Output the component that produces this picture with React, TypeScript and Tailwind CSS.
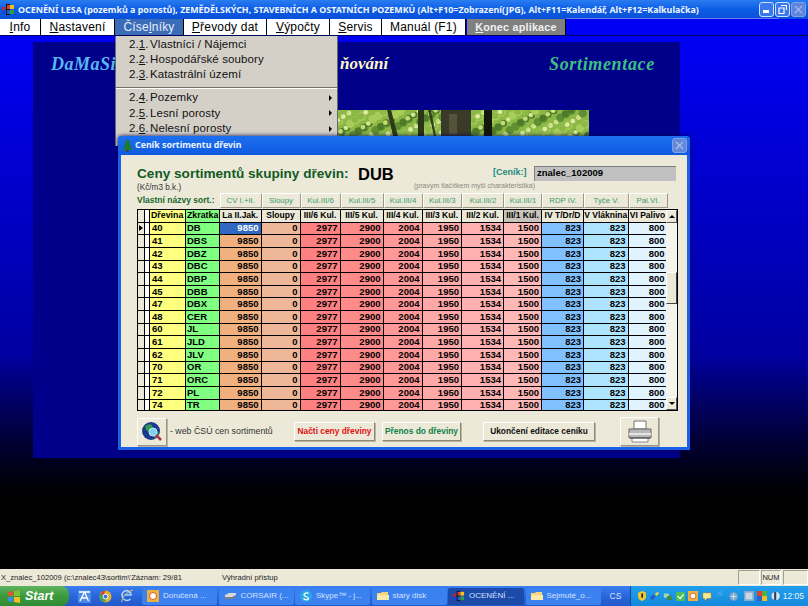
import React from "react";

const rows: [string, string][] = [
  ["40", "DB"], ["41", "DBS"], ["42", "DBZ"], ["43", "DBC"], ["44", "DBP"], ["45", "DBB"], ["47", "DBX"], ["48", "CER"],
  ["60", "JL"], ["61", "JLD"], ["62", "JLV"], ["70", "OR"], ["71", "ORC"], ["72", "PL"], ["74", "TR"],
];
const headers = ["La II.Jak.", "Sloupy", "III/6 Kul.", "III/5 Kul.", "III/4 Kul.", "III/3 Kul.", "III/2 Kul.", "III/1 Kul.", "IV T/Dr/D", "V Vláknina", "VI Palivo"];
const values = ["9850", "0", "2977", "2900", "2004", "1950", "1534", "1500", "823", "823", "800"];
const colors = ["bg-[#f0b080]", "bg-[#eeb898]", "bg-[#ff8080]", "bg-[#ff8a8a]", "bg-[#ff9898]", "bg-[#ffa8a8]", "bg-[#ffb0b0]", "bg-[#ffb8b8]", "bg-[#80c0ff]", "bg-[#aee4ff]", "bg-[#e0f3ff]"];
const tabs: [string, string][] = [
  ["CV I.+II.", "w-[41.5px]"], ["Sloupy", "w-[39px]"], ["Kul.III/6", "w-[40px]"], ["Kul.III/5", "w-[43px]"], ["Kul.III/4", "w-[39px]"],
  ["Kul.III/3", "w-[39.5px]"], ["Kul.III/2", "w-[42px]"], ["Kul.III/1", "w-[38px]"], ["RDP IV.", "w-[42px]"], ["Tyče V.", "w-[44.5px]"], ["Pal.VI.", "w-[39px]"],
];

// leafy blotches of the forest photo
const leafColors = ["#c4dc78", "#8cb848", "#5f8f30", "#dcebA0", "#4f7a2a", "#a8cc58"];
const leaves = Array.from({ length: 260 }, (_, i) => ({
  x: (i * 97.3) % 252,
  y: (i * 41.7) % 26,
  r: 1.5 + ((i * 7) % 4) * 0.9,
  c: leafColors[(i * 5 + (i >> 2)) % leafColors.length],
}));

function Menu({ w, label, u, rest, active }: { w: string; label?: string; u: string; rest: string; active?: boolean }) {
  return (
    <div className={`${w} h-full shrink-0 flex items-center justify-center border-r border-black text-[12px] tracking-[0.2px] ${active ? "bg-[#3a6cb8] text-[#e8eefa]" : "bg-white text-black"}`}>
      {label}<span className="underline">{u}</span>{rest}
    </div>
  );
}

function Drop({ n, u, label, arrow, h }: { n: string; u: string; label: string; arrow?: boolean; h: string }) {
  return (
    <div className={`${h} flex items-center pl-[13px] pr-[5px] text-[11.5px] text-[#111] tracking-[0.1px]`}>
      <span className="w-[21px] shrink-0">{n}<span className="underline">{u}</span>.</span>
      <span className="flex-1">{label}</span>
      {arrow && <span className="w-0 h-0 border-y-[3px] border-y-transparent border-l-[3px] border-l-black" />}
    </div>
  );
}

function Btn({ w, text, color }: { w: string; text: string; color: string }) {
  return (
    <div className={`${w} h-[19px] shrink-0 flex items-center justify-center bg-[#ece9d8] border border-t-white border-l-white border-r-[#8a8878] border-b-[#8a8878] shadow-[1px_1px_0_#b8b5a5] text-[8.4px] font-bold whitespace-nowrap ${color}`}>
      {text}
    </div>
  );
}

function Task({ icon, text, w, active }: { icon: React.ReactNode; text: string; w: string; active?: boolean }) {
  return (
    <div className={`${w} h-[17px] shrink-0 flex items-center gap-[4px] pl-[5px] rounded-[2px] text-[8px] text-[#d4e2ff] overflow-hidden ${active ? "bg-[#1c4aa8]" : "bg-[#3c81f0]"}`}>
      {icon}
      <span className="whitespace-nowrap">{text}</span>
    </div>
  );
}

const Folder = () => (
  <svg width="12" height="10" viewBox="0 0 12 10" className="shrink-0"><path d="M0 2h4l1-1h6v8H0z" fill="#f5d77a" /><path d="M0 4h12v5H0z" fill="#fbe9a8" /></svg>
);
const Logo = ({ s = 13 }: { s?: number }) => (
  <svg width={s} height={s} viewBox="0 0 13 13" className="shrink-0">
    <rect x="0" y="4" width="3" height="3" fill="#d02020" /><rect x="0" y="8" width="3" height="3" fill="#2040d0" />
    <rect x="4" y="1" width="4" height="11" fill="#111" /><rect x="5" y="2" width="3" height="4" fill="#e04030" />
    <rect x="8" y="2" width="4" height="4" fill="#f0c020" /><rect x="8" y="7" width="4" height="4" fill="#30a040" /><rect x="5" y="7" width="3" height="4" fill="#2060d0" />
  </svg>
);

export default function App() {
  return (
    <div className="relative w-[808px] h-[606px] overflow-hidden flex flex-col bg-black font-['Liberation_Sans',sans-serif]">
      {/* Title bar */}
      <div className="h-[19px] shrink-0 flex items-center pl-[2px] pr-[2px] bg-gradient-to-b from-[#2a7cf0] via-[#0a5ce6] to-[#0a50d8]">
        <Logo />
        <span className="ml-[3px] text-[8.9px] font-bold text-[#f2f6ff] whitespace-nowrap font-['Noto_Sans',sans-serif]">
          OCENĚNÍ LESA (pozemků a porostů), ZEMĚDĚLSKÝCH, STAVEBNÍCH A OSTATNÍCH POZEMKŮ (Alt+F10=Zobrazení(JPG), Alt+F11=Kalendář, Alt+F12=Kalkulačka)
        </span>
        <div className="ml-auto flex gap-[1px]">
          <div className="w-[15px] h-[15px] rounded-[3px] border border-[#cfe0ff] bg-[#3a78ee] flex items-end pl-[3px] pb-[3px]"><span className="w-[6px] h-[3px] bg-white" /></div>
          <div className="w-[15px] h-[15px] rounded-[3px] border border-[#cfe0ff] bg-[#3a78ee] flex items-center justify-center">
            <svg width="9" height="9" viewBox="0 0 9 9"><path d="M3 .5h5.5V5M1 3h5v5.5H1z" fill="none" stroke="#fff" strokeWidth="1.2" /></svg>
          </div>
          <div className="w-[15px] h-[15px] rounded-[3px] border border-[#7fa2ea] bg-[#5f86dc] flex items-center justify-center">
            <svg width="9" height="9" viewBox="0 0 9 9"><path d="M1 1l7 7M8 1l-7 7" stroke="#9db7ee" strokeWidth="1.4" /></svg>
          </div>
        </div>
      </div>

      {/* Menu bar */}
      <div className="h-[17px] shrink-0 flex bg-[#0000f4] border-b border-[#000060]">
        <Menu w="w-[41px]" u="I" rest="nfo" />
        <Menu w="w-[74px]" u="N" rest="astavení" />
        <Menu w="w-[69px]" label="Číse" u="l" rest="níky" active />
        <Menu w="w-[83px]" u="P" rest="řevody dat" />
        <Menu w="w-[63px]" u="V" rest="ýpočty" />
        <Menu w="w-[52px]" u="S" rest="ervis" />
        <Menu w="w-[84px]" label="Manuál (F1)" u="" rest="" />
        <div className="ml-[1px] w-[99px] h-full flex items-center justify-center bg-[#808080] text-[#f0f0f0] font-bold text-[10.8px] tracking-[0.2px] border-r border-black">
          <span className="underline">K</span>onec aplikace
        </div>
        <div className="w-[213px] h-[1px] -mt-[1px] bg-[#6f78e8]" />
      </div>

      {/* Desktop area */}
      <div className="flex-1 min-h-0 bg-gradient-to-b from-[#0000f4] via-[#0000a0] via-60% to-black to-90% pt-[6px] pl-[33px]">
        <div className="w-[647px] h-[416px] bg-[#00008a] flex flex-col">
          <div className="flex items-center h-[44px] font-['Liberation_Serif',serif] italic font-bold text-[18px] tracking-[0.5px]">
            <span className="ml-[18px] text-[#58b8f0]">DaMaSi</span>
            <span className="ml-[224px] w-[49px] text-[17px] text-[#fff8c8] whitespace-nowrap tracking-[0px]">ňování</span>
            <span className="ml-[160px] text-[#3cc080] tracking-[0.65px]">Sortimentace</span>
          </div>
          <svg width="252" height="26" viewBox="0 0 252 26" className="ml-[304px] mt-[24px]">
            <defs><filter id="soft"><feGaussianBlur stdDeviation="0.7" /></filter></defs>
            <rect width="252" height="26" fill="#8cb848" />
            <g filter="url(#soft)">
              {leaves.map((l, i) => (
                <circle key={i} cx={l.x} cy={l.y} r={l.r} fill={l.c} />
              ))}
            </g>
            <path d="M50 0l6 26h5L54 0z" fill="#2e3a18" />
            <rect x="81" width="6" height="26" fill="#2a3416" />
            <path d="M91 0l6 26h2L94 0z" fill="#30401a" />
            <rect x="104" width="30" height="26" fill="#3a3a28" />
            <rect x="112" y="4" width="8" height="20" fill="#55523c" />
            <rect x="147" width="8" height="26" fill="#14180c" />
          </svg>
        </div>
      </div>

      {/* Status bar */}
      <div className="h-[17px] shrink-0 flex items-center bg-[#ece9d8] text-[7.6px] text-[#222]">
        <span className="ml-[1px] w-[221px] whitespace-nowrap">X_znalec_102009 (c:\znalec43\sortim\'Záznam: 29/81</span>
        <span className="whitespace-nowrap">Výhradní přístup</span>
        <div className="ml-auto flex h-full items-center">
          <div className="w-[22px] h-[15px] border border-t-[#a0a090] border-l-[#a0a090] border-r-white border-b-white" />
          <div className="w-[20px] ml-[1px] h-[15px] border border-t-[#a0a090] border-l-[#a0a090] border-r-white border-b-white flex items-center justify-center text-[7.5px]">NUM</div>
          <div className="w-[25px] h-[15px] ml-[2px] border border-t-[#a0a090] border-l-[#a0a090] border-r-white border-b-white" />
        </div>
      </div>

      {/* Taskbar */}
      <div className="h-[20px] shrink-0 flex items-center bg-gradient-to-b from-[#3a7ff0] via-[#2a66dc] to-[#2458c8]">
        <div className="w-[69px] h-full shrink-0 flex items-center gap-[4px] pl-[7px] rounded-r-[8px] bg-gradient-to-b from-[#5fb45f] via-[#3c9a3c] to-[#2f8a34] text-white italic font-bold text-[12.5px]">
          <svg width="14" height="13" viewBox="0 0 14 13" className="shrink-0"><path d="M1 2l5-1v5H1z" fill="#e8522a" /><path d="M7 1l6-1v6H7z" fill="#7cc03c" /><path d="M1 7h5v5l-5-1z" fill="#3c8cf0" /><path d="M7 7h6v6l-6-1z" fill="#f4c020" /></svg>
          Start
        </div>
        <div className="flex items-center gap-[8px] ml-[9px] w-[63px] shrink-0">
          <svg width="13" height="13" viewBox="0 0 13 13" className="shrink-0"><rect width="13" height="13" fill="#4a8ae8" /><path d="M1 2h11M6.5 2L2 11M6.5 2l4 9M4 8h5" stroke="#fff" strokeWidth="1.3" fill="none" /></svg>
          <svg width="13" height="13" viewBox="0 0 13 13" className="shrink-0"><circle cx="6.5" cy="6.5" r="6" fill="#e0b030" /><path d="M6.5 .5a6 6 0 0 0-5 3l2.5 4z" fill="#d84030" /><path d="M1.5 3.5a6 6 0 0 0 4 9l2-4z" fill="#48a048" /><circle cx="6.5" cy="6.5" r="2.5" fill="#3a78d8" stroke="#fff" /></svg>
          <svg width="14" height="14" viewBox="0 0 14 14" className="shrink-0"><path d="M3 9a4.5 4.5 0 1 1 8-3H4.5M3.5 10c2 2 5 2 7 0" fill="none" stroke="#a8d4ff" strokeWidth="1.7" /><path d="M2 13C1 10 6 3 13 1" stroke="#e8c860" strokeWidth="1" fill="none" /></svg>
          <span className="text-[8px] text-[#cfe0ff] -mt-[6px]">»</span>
        </div>
        <div className="flex items-center gap-[1.5px] ml-[1px]">
          <Task w="w-[75px]" text="Doručená ..." icon={<svg width="12" height="12" viewBox="0 0 12 12" className="shrink-0"><rect width="12" height="12" fill="#f0b040" /><circle cx="6" cy="6" r="3.5" fill="#fff" stroke="#d06020" /></svg>} />
          <Task w="w-[75px]" text="CORSAIR (..." icon={<svg width="13" height="8" viewBox="0 0 13 8" className="shrink-0"><path d="M1 3l4-2h7v2l-4 3H1z" fill="#d8d8d8" /><path d="M1 5h7l4-2v1l-4 3H1z" fill="#808080" /></svg>} />
          <Task w="w-[75px]" text="Skype™ - j..." icon={<svg width="12" height="12" viewBox="0 0 12 12" className="shrink-0"><circle cx="6" cy="6" r="6" fill="#28a8e8" /><path d="M8.5 3.5C7 2.5 3.8 3 4 5s4.500 1.500 4.500 3.500S5 10 3.500 8.500" stroke="#fff" strokeWidth="1.3" fill="none" /></svg>} />
          <Task w="w-[75px]" text="stary disk" icon={<Folder />} />
          <Task w="w-[76px]" text="OCENĚNÍ ..." active icon={<Logo s={12} />} />
          <Task w="w-[75px]" text="Sejmuté_o..." icon={<Folder />} />
        </div>
        <span className="ml-[9px] text-[8.5px] text-[#dbe6ff]">CS</span>
        <div className="ml-auto w-[178px] h-full flex items-center gap-[3px] pl-[7px] bg-gradient-to-b from-[#22a0ec] to-[#1488dc] border-l border-[#0c4aa8]">
          <svg width="10" height="12" viewBox="0 0 10 12"><path d="M5 0l5 2v4c0 3-2 5-5 6-3-1-5-3-5-6V2z" fill="#f0c830" /><rect x="4" y="3" width="2" height="5" fill="#223" /></svg>
          <svg width="13" height="12" viewBox="0 0 13 12"><path d="M1 8l4-4 3 3-4 4z" fill="#3058c0" /><path d="M7 4l3-3 2 2-3 3z" fill="#f0d040" /></svg>
          <svg width="12" height="12" viewBox="0 0 12 12"><path d="M1 3h6v5H1z" fill="#a8d8a0" /><path d="M5 6h6v5H5z" fill="#408848" /></svg>
          <svg width="11" height="11" viewBox="0 0 11 11"><rect width="11" height="11" rx="2" fill="#50c050" /><path d="M2 5l3 3 4-5" stroke="#fff" strokeWidth="1.5" fill="none" /></svg>
          <svg width="12" height="12" viewBox="0 0 12 12"><rect width="12" height="12" fill="#f0b040" /><circle cx="6" cy="6" r="3.5" fill="#fff" stroke="#d06020" /></svg>
          <svg width="12" height="11" viewBox="0 0 12 11"><path d="M1 1h10v7H6l-3 3V8H1z" fill="#f8e890" stroke="#806020" strokeWidth=".5" /></svg>
          <svg width="14" height="12" viewBox="0 0 14 12"><path d="M3 6a5 5 0 0 1 5-5M6 6a3 3 0 0 1 3-3" stroke="#58a8e8" fill="none" strokeWidth="1.2" /></svg>
          <svg width="11" height="11" viewBox="0 0 11 11"><circle cx="5.5" cy="5.5" r="5" fill="#80a8c8" /><path d="M2 5.5h7M5.5 2v7" stroke="#e0f0ff" /></svg>
          <svg width="12" height="12" viewBox="0 0 12 12" className="ml-[3px]"><rect width="12" height="12" fill="#88a8c8" /><rect x="2" y="2" width="8" height="8" fill="#c8d8e8" /></svg>
          <svg width="12" height="12" viewBox="0 0 12 12"><rect width="6" height="6" fill="#e04030" /><rect x="6" width="6" height="6" fill="#50b040" /><rect y="6" width="6" height="6" fill="#3060d0" /><rect x="6" y="6" width="6" height="6" fill="#f0c020" /></svg>
          <svg width="11" height="12" viewBox="0 0 11 12"><circle cx="5.5" cy="6" r="5" fill="#d8e4f0" /><path d="M5 1v10" stroke="#304060" strokeWidth="2.5" /></svg>
          <span className="ml-auto mr-[4px] text-[8.5px] text-[#eaf4ff]">12:05</span>
        </div>
      </div>

      {/* Dropdown menu */}
      <div className="absolute left-[115px] top-[36px] w-[223px] h-[110px] bg-[#d4d0c8] border-x border-[#6a6a6a]">
        <div className="pt-[1px]">
          <Drop n="2." u="1" label="Vlastníci / Nájemci" h="h-[15px]" />
          <Drop n="2." u="2" label="Hospodářské soubory" h="h-[15px]" />
          <Drop n="2." u="3" label="Katastrální území" h="h-[15px]" />
        </div>
        <div className="mt-[5px] mb-[1px] h-[2px] bg-[#707070] border-b border-white" />
        <Drop n="2." u="4" label="Pozemky" arrow h="h-[15.5px]" />
        <Drop n="2." u="5" label="Lesní porosty" arrow h="h-[15.5px]" />
        <Drop n="2." u="6" label="Nelesní porosty" arrow h="h-[15.5px]" />
      </div>

      {/* Dialog */}
      <div className="absolute left-[118px] top-[136px] w-[572px] h-[314px] flex flex-col rounded-t-[4px] bg-[#1a60e8] shadow-[0_0_4px_#000050]">
        <div className="h-[19px] shrink-0 flex items-center pl-[4px] pr-[3px] rounded-t-[4px] bg-gradient-to-b from-[#1c70f0] to-[#0f5ae0]">
          <svg width="11" height="13" viewBox="0 0 11 13"><path d="M5.5 0l3 4H7l3 4H8l3 3H0l3-3H1l3-4H2.5z" fill="#1d7a32" /><rect x="4.5" y="11" width="2" height="2" fill="#5a3a10" /></svg>
          <span className="ml-[2px] text-[8.8px] font-bold text-[#eef4ff] font-['Noto_Sans',sans-serif]">Ceník sortimentu dřevin</span>
          <div className="ml-auto w-[15px] h-[15px] rounded-[3px] border border-[#7fa2ea] bg-[#6488d8] flex items-center justify-center">
            <svg width="9" height="9" viewBox="0 0 9 9"><path d="M1 1l7 7M8 1l-7 7" stroke="#a8bdec" strokeWidth="1.4" /></svg>
          </div>
        </div>
        <div className="flex-1 min-h-0 mx-[3px] mb-[3px] bg-[#ece9d8] pl-[16px] pr-[9px] flex flex-col">
          <div className="h-[16px] mt-[10px] flex items-center">
            <span className="w-[212px] pt-[2px] text-[13.6px] font-bold text-[#125a24] whitespace-nowrap">Ceny sortimentů skupiny dřevin:</span>
            <span className="ml-[9px] w-[35px] pt-[2px] text-[16.5px] font-bold text-black">DUB</span>
            <span className="ml-[100px] text-[9px] font-bold text-[#1c8a80] w-[41px] whitespace-nowrap">[Ceník:]</span>
            <div className="w-[142px] h-[15px] bg-[#c0c0c0] border-t border-l border-[#808080] flex items-center pl-[2px] text-[9.5px] font-bold text-black">znalec_102009</div>
          </div>
          <div className="h-[11px] flex items-center">
            <span className="pt-[4px] text-[8.2px] text-[#333] w-[277px]">(Kč/m3 b.k.)</span>
            <span className="text-[7px] text-[#8a8a80] whitespace-nowrap">(pravým tlačítkem myši charakteristika)</span>
          </div>
          <div className="h-[16px] flex items-end">
            <span className="w-[83px] self-center text-[8.5px] font-bold text-[#16682c] whitespace-nowrap">Vlastní názvy sort.:</span>
            {tabs.map(([t, w]) => (
              <div key={t} className={`${w} h-[15px] shrink-0 flex items-center justify-center border-l border-t border-white border-r border-r-[#9a9888] border-b border-b-[#9a9888] text-[7.8px] text-[#3a9a70] whitespace-nowrap`}>{t}</div>
            ))}
          </div>

          {/* Table */}
          <div className="mt-[1px] flex w-[541px] h-[202px] border border-black bg-[#808080] overflow-hidden">
            <div className="grid w-[528px] shrink-0 grid-cols-[7px_5px_36px_34px_41.5px_39px_40px_43px_39px_39.5px_42px_38px_42px_44.5px_39px] auto-rows-[12.65px] content-start">
              <div className="bg-[#ece9d8] border-r border-b border-black" />
              <div className="bg-white border-r border-b border-black" />
              <div className="bg-[#ffff80] border-r border-b border-black flex items-center pl-[1px] text-[8.8px] font-bold text-black">Dřevina</div>
              <div className="bg-[#80ff80] border-r border-b border-black flex items-center pl-[1px] text-[8.8px] font-bold text-black">Zkratka</div>
              {headers.map((h, i) => (
                <div key={h} className={`${i === 7 ? "bg-[#c8c4bc]" : "bg-[#ece9d8]"} border-r border-b border-black flex items-center justify-center text-[8.5px] font-bold text-black whitespace-nowrap`}>{h}</div>
              ))}
              {rows.map(([a, b], r) => (
                <React.Fragment key={a}>
                  <div className="bg-[#ece9d8] border-r border-b border-black flex items-center justify-center">
                    {r === 0 && <span className="w-0 h-0 border-y-[3px] border-y-transparent border-l-[4px] border-l-black" />}
                  </div>
                  <div className="bg-white border-r border-b border-black" />
                  <div className="bg-[#ffff80] border-r border-b border-black flex items-center pl-[2px] text-[9.5px] font-bold text-black">{a}</div>
                  <div className="bg-[#80ff80] border-r border-b border-black flex items-center pl-[1px] text-[9.5px] font-bold text-black">{b}</div>
                  {values.map((v, i) => (
                    <div key={i} className={`${r === 0 && i === 0 ? "bg-[#3168c0] text-white" : `${colors[i]} text-black`} border-r border-b border-black flex items-center justify-end pr-[2px] text-[9.5px] font-bold`}>{v}</div>
                  ))}
                </React.Fragment>
              ))}
            </div>
            {/* Scrollbar */}
            <div className="flex-1 flex flex-col bg-[#f5f4ec]">
              <div className="h-[13px] shrink-0 flex items-center justify-center bg-[#ece9d8] border border-t-white border-l-white border-r-[#555] border-b-[#555]">
                <span className="w-0 h-0 border-x-[3px] border-x-transparent border-b-[3px] border-b-black" />
              </div>
              <div className="mt-[49px] h-[32px] shrink-0 bg-[#ece9d8] border border-t-white border-l-white border-r-[#444] border-b-[#444]" />
              <div className="mt-auto h-[13px] shrink-0 flex items-center justify-center bg-[#ece9d8] border border-t-white border-l-white border-r-[#555] border-b-[#555]">
                <span className="w-0 h-0 border-x-[3px] border-x-transparent border-t-[3px] border-t-black" />
              </div>
            </div>
          </div>

          {/* Bottom row */}
          <div className="mt-[6px] flex items-center">
            <div className="w-[30px] h-[28px] shrink-0 flex items-center justify-center bg-[#ece9d8] border border-t-white border-l-white border-r-[#9a9888] border-b-[#9a9888] shadow-[1px_1px_0_#b8b5a5]">
              <svg width="22" height="22" viewBox="0 0 22 22">
                <circle cx="10" cy="10" r="9" fill="#1c3a8c" />
                <path d="M4 5q4-3 7-1l1 4-4 3-3-2zM12 13l5-3 1 3-4 5z" fill="#2e9a50" />
                <circle cx="12" cy="11" r="4" fill="#7fd0ec" stroke="#c8e8f8" />
                <path d="M15 14l5 5" stroke="#b03050" strokeWidth="2.5" />
              </svg>
            </div>
            <span className="ml-[3px] w-[124px] text-[8.8px] text-[#333] whitespace-nowrap">- web ČSÚ cen sortimentů</span>
            <Btn w="w-[81px]" text="Načti ceny dřeviny" color="text-[#e01010]" />
            <div className="w-[7px]" />
            <Btn w="w-[79px]" text="Přenos do dřeviny" color="text-[#108048]" />
            <div className="w-[22px]" />
            <Btn w="w-[112px]" text="Ukončení editace ceníku" color="text-[#111]" />
            <div className="w-[25px]" />
            <div className="w-[39px] h-[29px] shrink-0 flex items-center justify-center bg-[#ece9d8] border border-t-white border-l-white border-r-[#9a9888] border-b-[#9a9888] shadow-[1px_1px_0_#b8b5a5]">
              <svg width="24" height="23" viewBox="0 0 24 23">
                <path d="M6 1h12v8H6z" fill="#fff" stroke="#777" />
                <path d="M1 9h22v9H1z" fill="#b8b8b8" stroke="#666" />
                <path d="M1 13h22v2H1z" fill="#e4e4e4" />
                <path d="M4 18h16v4H4z" fill="#fff" stroke="#888" />
                <path d="M2 18h20" stroke="#444" />
              </svg>
            </div>
          </div>
        </div>
      </div>
    </div>
  );
}
